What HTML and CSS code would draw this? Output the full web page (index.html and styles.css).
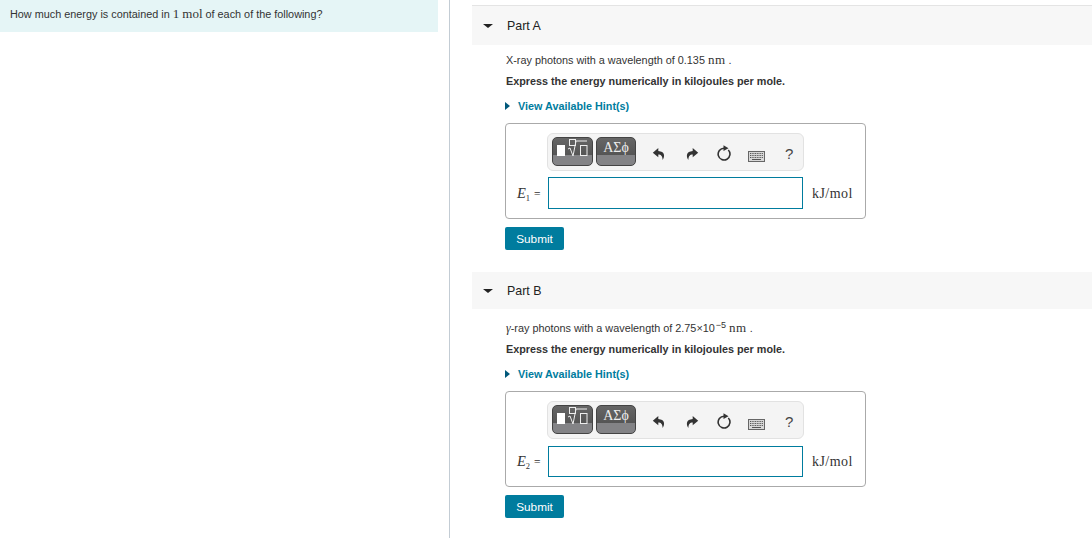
FILE: index.html
```html
<!DOCTYPE html>
<html lang="en">
<head>
<meta charset="utf-8">
<title>Energy per mole</title>
<link rel="stylesheet" href="styles.css">
</head>
<body>
<svg class="defs" width="0" height="0" aria-hidden="true">
  <symbol id="undo" viewBox="0 0 14 14"><path d="M6.300 1 .8 5.700l5.500 4.500V7.500c2.600 0 4 1.200 4.400 5.500 2.300-3.600 2.300-8.500-4.400-9z" fill="#333"/></symbol>
  <symbol id="redo" viewBox="0 0 14 14"><path d="M7.700 1l5.500 4.700-5.500 4.500V7.500c-2.600 0-4 1.200-4.400 5.500C1 9.400 1 4.500 7.700 4z" fill="#333"/></symbol>
  <symbol id="reset" viewBox="0 0 16 16"><path d="M8 3.200A5.900 5.900 0 1 0 12.300 5" fill="none" stroke="#333" stroke-width="1.600"/><path d="M7.500.3l5 2.900-5 2.800z" fill="#333"/></symbol>
  <symbol id="keys" viewBox="0 0 17 11"><rect x=".5" y=".5" width="16" height="10" fill="#d8d8d8" stroke="#666"/><path d="M2 2.500h13M2 4.500h13M2 6.500h13" stroke="#555" stroke-dasharray="1 .7"/><path d="M4 8.500h9" stroke="#555"/></symbol>
  <symbol id="root" viewBox="0 0 24 26"><rect x="3.500" y="1.500" width="6" height="6" fill="none" stroke="#eee"/><path d="M2 11l2-1 3 8 3-15h11" fill="none" stroke="#eee"/><rect x="14.500" y="7.500" width="6.500" height="10" fill="none" stroke="#eee"/></symbol>
</svg>
<div class="page">
  <aside class="left">
    <div class="intro">How much energy is contained in <span class="math">1</span> <span class="math">mol</span> of each of the following?</div>
  </aside>
  <main class="right">

    <section class="part part-a">
      <header class="part-head head-a"><span class="caret"></span><span class="part-title">Part A</span></header>
      <div class="part-body">
        <p class="line first-a">X-ray photons with a wavelength of 0.135 <span class="math wide">nm</span> .</p>
        <p class="line strong">Express the energy numerically in kilojoules per mole.</p>
        <p class="hint"><span class="hint-arrow"></span>View Available Hint(s)</p>
        <div class="answer">
          <div class="tools">
            <div class="tool-btn tool-tmpl"><span class="blk"></span><svg class="root"><use href="#root"/></svg></div>
            <div class="tool-btn tool-sym">ΑΣϕ</div>
            <svg class="ico ico-undo"><use href="#undo"/></svg>
            <svg class="ico ico-redo"><use href="#redo"/></svg>
            <svg class="ico-reset"><use href="#reset"/></svg>
            <svg class="ico-keys"><use href="#keys"/></svg>
            <span class="help">?</span>
          </div>
          <div class="entry">
            <span class="label"><i class="var">E</i><sub>1</sub> =</span>
            <div class="field"></div>
            <span class="unit">kJ/mol</span>
          </div>
        </div>
        <button class="submit">Submit</button>
      </div>
    </section>

    <section class="part part-b">
      <header class="part-head head-b"><span class="caret"></span><span class="part-title">Part B</span></header>
      <div class="part-body">
        <p class="line first-b"><span class="gamma">γ</span>-ray photons with a wavelength of 2.75×10<sup>−5</sup> <span class="math wide">nm</span> .</p>
        <p class="line strong">Express the energy numerically in kilojoules per mole.</p>
        <p class="hint"><span class="hint-arrow"></span>View Available Hint(s)</p>
        <div class="answer answer-b">
          <div class="tools">
            <div class="tool-btn tool-tmpl"><span class="blk"></span><svg class="root"><use href="#root"/></svg></div>
            <div class="tool-btn tool-sym">ΑΣϕ</div>
            <svg class="ico ico-undo"><use href="#undo"/></svg>
            <svg class="ico ico-redo"><use href="#redo"/></svg>
            <svg class="ico-reset"><use href="#reset"/></svg>
            <svg class="ico-keys"><use href="#keys"/></svg>
            <span class="help">?</span>
          </div>
          <div class="entry">
            <span class="label"><i class="var">E</i><sub>2</sub> =</span>
            <div class="field field-b"></div>
            <span class="unit">kJ/mol</span>
          </div>
        </div>
        <button class="submit">Submit</button>
      </div>
    </section>

  </main>
</div>
</body>
</html>
```
FILE: styles.css
```css
* { box-sizing: border-box; }
html, body { margin: 0; padding: 0; height: 100%; overflow: hidden; background: #fff; }
body { font-family: "Liberation Sans", Arial, sans-serif; font-size: 10.850px; color: #333; }
.defs { display: block; height: 0; }
.page { display: flex; height: 538px; }
.left { width: 450px; flex: none; border-right: 1px solid #c3ccd4; padding-right: 11px; }
.intro { height: 32px; background: #e5f5f6; padding: 8px 10px 0; line-height: 13px; }
.math { font-family: "Liberation Serif", "Times New Roman", serif; font-size: 13px; line-height: 0; }
.wide { letter-spacing: .5px; }
.right { flex: 1; min-width: 0; padding: 5px 0 0 22px; }
.part-head { display: flex; align-items: center; background: #f7f7f7; }
.head-a { height: 40px; border-top: 1px solid #e4e4e4; }
.head-b { height: 37px; }
.part-b { margin-top: 22px; }
.caret { width: 0; height: 0; margin-left: 11px; border-left: 5px solid transparent; border-right: 5px solid transparent; border-top: 4.500px solid #222; }
.part-title { margin-left: 14px; font-size: 12.400px; color: #222; }
.part-body { padding-left: 33px; }
.line { margin: 0; line-height: 14px; padding-left: 1px; }
.first-a { padding-top: 8px; }
.first-b { padding-top: 12px; }
.first-b sup { font-size: 9px; line-height: 0; vertical-align: 4px; margin-left: 1px; }
.gamma { font-family: "Liberation Serif", serif; font-size: 12px; font-style: italic; line-height: 0; }
.strong { margin-top: 7px; font-weight: 700; font-size: 10.800px; }
.hint { display: flex; align-items: center; margin: 11px 0 0; line-height: 14px; color: #007c9e; font-weight: 700; font-size: 10.800px; }
.hint-arrow { width: 0; height: 0; margin-right: 8px; border-top: 4px solid transparent; border-bottom: 4px solid transparent; border-left: 5px solid #00587a; }
.answer { margin-top: 10px; width: 361px; height: 96px; border: 1px solid #aaa; border-radius: 4px; padding: 9px 12px 0 10px; }
.tools { display: flex; align-items: center; width: 257px; height: 38px; margin-left: 31px; padding: 3px 0 4px 4px; background: #f4f4f4; border: 1px solid #e2e2e2; border-radius: 6px; }
.tool-btn { height: 29px; flex: none; border-radius: 5px; border: 1px solid #444; background: linear-gradient(#666 0, #555 62%, #838386 62%, #838386 100%); color: #eee; }
.tool-tmpl { display: flex; width: 41px; padding-left: 4px; align-items: flex-start; }
.blk { width: 8px; height: 11px; margin-top: 7px; background: #fff; }
.root { display: block; width: 24px; height: 26px; margin-left: 1px; }
.tool-btn.tool-sym { width: 40px; margin-left: 3px; padding-top: 2px; text-align: center; font-family: "Liberation Serif", serif; font-size: 14px; line-height: 16px; }
.ico { width: 14px; height: 14px; flex: none; margin-top: 4px; }
.ico-undo { margin-left: 16px; }
.ico-redo { margin-left: 19px; }
.ico-reset { width: 16px; height: 16px; margin: 3px 0 0 17px; flex: none; }
.ico-keys { width: 17px; height: 11px; margin: 9px 0 0 16px; flex: none; }
.help { margin: 3px 0 0 20px; font-size: 15px; color: #444; }
.entry { display: flex; align-items: center; margin-top: 6px; height: 32px; }
.label { width: 32px; padding-left: 1px; font-family: "Liberation Serif", serif; font-size: 11.500px; white-space: nowrap; }
.var { font-size: 14.500px; }
.label sub { font-size: 8.500px; line-height: 0; margin-right: 1px; }
.field { flex: none; width: 255px; height: 32px; background: #fff; border: 1px solid #007c9e; }
.field-b { height: 31px; }
.answer-b .entry { margin-top: 7px; height: 31px; }
.unit { margin-left: 9px; padding-top: 1px; font-family: "Liberation Serif", serif; font-size: 14px; letter-spacing: .5px; color: #333; }
.submit { display: block; margin-top: 8px; width: 59px; height: 23px; padding: 0; border: 0; border-radius: 2px; background: #007c9e; color: #fff; font: 11.800px "Liberation Sans", Arial, sans-serif; }
```
